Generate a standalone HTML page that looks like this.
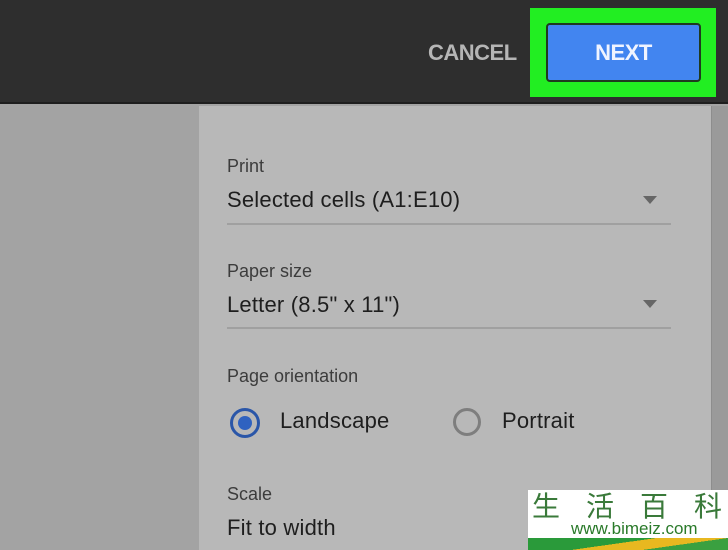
<!DOCTYPE html>
<html><head><style>
*{margin:0;padding:0;box-sizing:border-box}
body{width:728px;height:550px;overflow:hidden;position:relative;background:#a3a3a3;font-family:"Liberation Sans",Arial,sans-serif}
.hdr{position:absolute;left:0;top:0;width:728px;height:104px;background:#2e2e2e;border-bottom:2px solid #1e1e1e}
.cancel{position:absolute;left:428px;top:40px;color:#b5b5b5;font-weight:bold;font-size:22px;letter-spacing:-0.5px}
.green{position:absolute;left:530px;top:8px;width:186px;height:89px;background:#22ee22}
.btn{position:absolute;left:546px;top:23px;width:155px;height:59px;background:#4285f0;border:2px solid #1f3a1f;border-radius:4px;color:#f0f4ff;font-weight:bold;font-size:22px;text-align:center;line-height:55px;letter-spacing:-0.5px}
.panel{position:absolute;left:199px;top:106px;width:512px;height:444px;background:#b8b8b8}
.sb{position:absolute;left:711px;top:106px;width:17px;height:444px;background:#9a9a9a;border-left:1px solid #8d8d8d}
.lbl{position:absolute;left:227px;color:#3c3c3c;font-size:18px}
.val{position:absolute;left:227px;color:#1e1e1e;font-size:22px;letter-spacing:0.2px}
.line{position:absolute;left:227px;width:444px;height:2px;background:#a0a0a0}
.arr{position:absolute;left:643px;width:0;height:0;border-left:7px solid transparent;border-right:7px solid transparent;border-top:8px solid #666}
.r1{position:absolute;left:230px;top:408px;width:30px;height:30px;border-radius:50%;border:3px solid #2a56a8;background:#b8b8b8}
.r1 i{position:absolute;left:5px;top:5px;width:14px;height:14px;border-radius:50%;background:#2f62c0}
.r2{position:absolute;left:453px;top:408px;width:28px;height:28px;border-radius:50%;border:3px solid #7e7e7e}
.wm{position:absolute;left:528px;top:490px;width:200px;height:60px;background:#fff;overflow:hidden}
</style></head><body>
<div class="hdr"></div>
<div class="cancel">CANCEL</div>
<div class="green"></div>
<div class="btn">NEXT</div>
<div class="panel"></div>
<div class="sb"></div>
<div class="lbl" style="top:156px">Print</div>
<div class="val" style="top:187px">Selected cells (A1:E10)</div>
<div class="arr" style="top:196px"></div>
<div class="line" style="top:223px"></div>
<div class="lbl" style="top:261px">Paper size</div>
<div class="val" style="top:292px">Letter (8.5" x 11")</div>
<div class="arr" style="top:300px"></div>
<div class="line" style="top:327px"></div>
<div class="lbl" style="top:366px">Page orientation</div>
<div class="r1"><i></i></div>
<div class="val" style="left:280px;top:408px">Landscape</div>
<div class="r2"></div>
<div class="val" style="left:502px;top:408px">Portrait</div>
<div class="lbl" style="top:484px">Scale</div>
<div class="val" style="top:515px">Fit to width</div>
<div class="wm">
<div style="position:absolute;left:4px;top:0px;font-family:'Noto Sans CJK SC',sans-serif;font-size:28px;line-height:30px;color:#3a7a3a;letter-spacing:26px;white-space:nowrap">生活百科</div>
<div style="position:absolute;left:0;top:48px;width:200px;height:12px;background:linear-gradient(172deg,#2a9a3a 0 45%,#e8b820 45% 70%,#3aa040 70%)"></div>
<div style="position:absolute;left:43px;top:29px;font-size:17px;color:#2a7a2a">www.bimeiz.com</div>
</div>
</body></html>
